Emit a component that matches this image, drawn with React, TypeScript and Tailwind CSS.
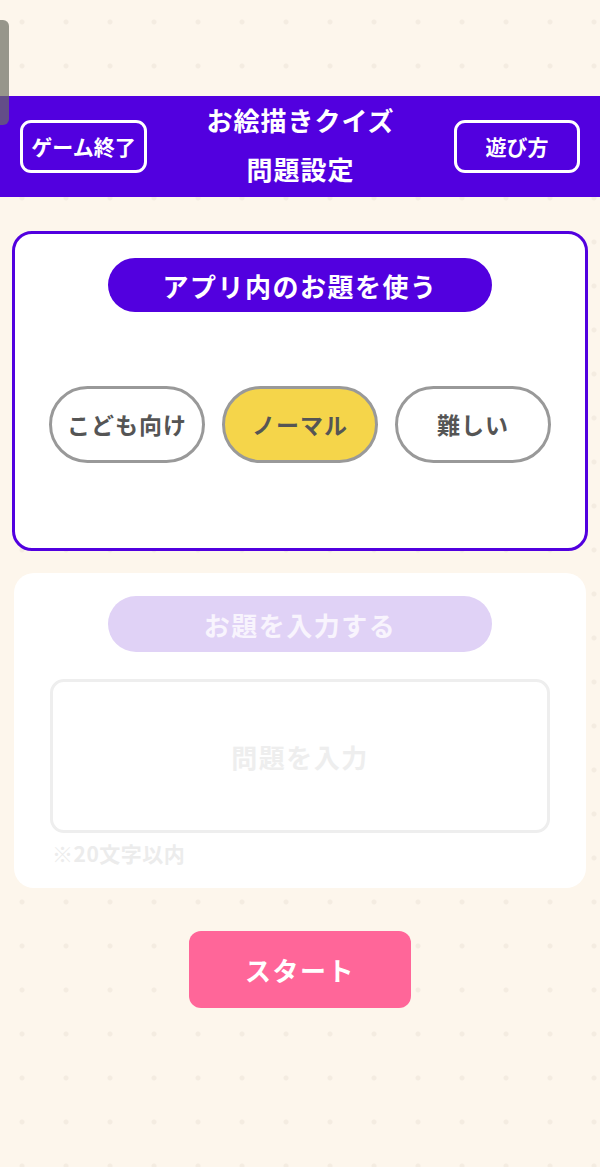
import React from "react";

export default function App() {
  const font = { fontFamily: '"Noto Sans CJK JP", "Noto Sans", sans-serif' };
  return (
    <div
      className="relative min-h-[1167px] w-[600px] bg-[#fdf6ec] bg-[radial-gradient(circle,#f4ece1_2px,transparent_3px)] bg-[length:44px_44px] flex flex-col items-center"
      style={font}
    >
      <div className="absolute left-0 top-[20px] h-[105px] w-[9px] rounded-r-[6px] bg-[#6b6e62]/70" />
      <div className="h-[96px]" />
      <header className="w-full h-[101px] bg-[#5200df] flex items-center justify-between px-[20px]">
        <button className="w-[127px] h-[53px] border-[3px] border-white rounded-[11px] text-white font-bold text-[21px] tracking-[0px]">
          ゲーム終了
        </button>
        <div className="flex flex-col items-center text-white font-bold text-[26px] tracking-[1px] leading-[49px] -mt-[5px]">
          <span>お絵描きクイズ</span>
          <span>問題設定</span>
        </div>
        <button className="w-[126px] h-[53px] border-[3px] border-white rounded-[11px] text-white font-bold text-[21px]">
          遊び方
        </button>
      </header>

      <section className="mt-[34px] w-[576px] h-[320px] bg-white border-[3px] border-[#5200df] rounded-[20px] flex flex-col items-center pt-[24px]">
        <div className="w-[384px] h-[54px] rounded-full bg-[#5200df] text-white font-bold text-[26px] tracking-[1.5px] flex items-center justify-center">
          アプリ内のお題を使う
        </div>
        <div className="mt-[74px] flex gap-[17px]">
          <button className="w-[156px] h-[77px] rounded-full border-[3px] border-[#999999] bg-white text-[#555555] font-bold text-[23px] tracking-[1px]">
            こども向け
          </button>
          <button className="w-[156px] h-[77px] rounded-full border-[3px] border-[#999999] bg-[#f5d54a] text-[#555555] font-bold text-[23px] tracking-[1px]">
            ノーマル
          </button>
          <button className="w-[156px] h-[77px] rounded-full border-[3px] border-[#999999] bg-white text-[#555555] font-bold text-[23px] tracking-[1px]">
            難しい
          </button>
        </div>
      </section>

      <section className="mt-[22px] w-[572px] h-[315px] bg-white rounded-[20px] flex flex-col items-center pt-[23px]">
        <div className="w-[384px] h-[56px] rounded-full bg-[#e0d2f6] text-[#f8f4fd] font-bold text-[26px] tracking-[1.5px] flex items-center justify-center">
          お題を入力する
        </div>
        <div className="mt-[27px] w-[500px] h-[154px] border-[3px] border-[#eeeeee] rounded-[14px] flex items-center justify-center text-[#eeeeee] font-bold text-[26px] tracking-[1.5px]">
          問題を入力
        </div>
        <div className="w-[500px] mt-[5px] pl-[2px] text-[#ececec] font-bold text-[21px] tracking-[0.5px]">
          ※20文字以内
        </div>
      </section>

      <button className="mt-[43px] w-[222px] h-[77px] rounded-[12px] bg-[#ff6699] text-white font-bold text-[26px] tracking-[1.5px]">
        スタート
      </button>
    </div>
  );
}
